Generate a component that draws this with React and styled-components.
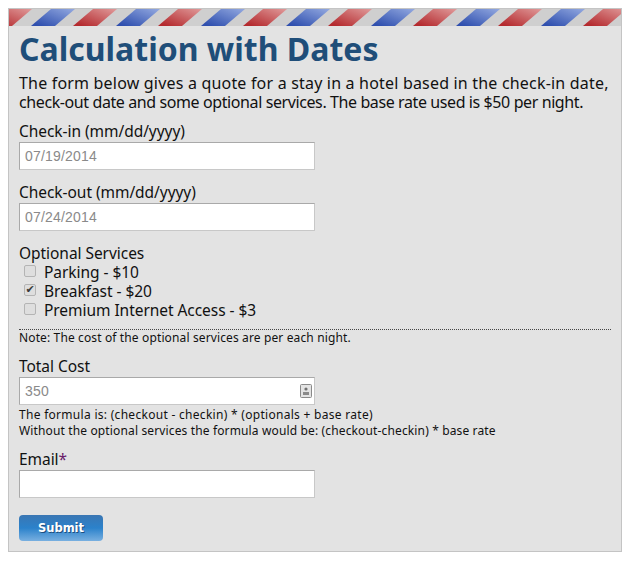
import React from "react";
import styled, { createGlobalStyle } from "styled-components";

const Global = createGlobalStyle`
  html, body { margin: 0; padding: 0; background: #fff; }
  body { font-family: "Noto Sans", "DejaVu Sans", sans-serif; color: #111; }
`;

const Card = styled.form`
  width: 614px;
  height: 544px;
  box-sizing: border-box;
  margin: 8px 0 0 8px;
  border: 1px solid #c4c4c4;
  background: #e3e3e3;
`;

const Stripe = styled.svg`
  display: block;
  width: 100%;
  height: 17px;
`;

const Body = styled.div`
  padding: 0 10px;
`;

const Title = styled.h1`
  margin: 3px 0 0;
  font-size: 32px;
  line-height: 40px;
  font-weight: 700;
  color: #1f4e79;
`;

const Intro = styled.p`
  margin: 5px 0 0;
  font-size: 16px;
  line-height: 19px;
`;

const Line = styled.span`
  display: block;
  white-space: nowrap;
  letter-spacing: ${(p) => p.$track}px;
`;

const Field = styled.div`
  margin-top: ${(p) => p.$top}px;
`;

const Label = styled.label`
  display: block;
  font-size: 15.5px;
  line-height: 20px;
  letter-spacing: -0.05px;
`;

const Star = styled.span`
  color: #6a1b6a;
`;

const InputWrap = styled.div`
  position: relative;
  width: 296px;
  margin-top: 1px;
`;

const Input = styled.input`
  display: block;
  width: 100%;
  height: 28px;
  box-sizing: border-box;
  padding: 0 5px;
  border: 1px solid #a9a9a9;
  border-bottom-color: #c8c8c8;
  border-right-color: #c8c8c8;
  background: #fff;
  font-family: "Liberation Sans", Arial, sans-serif;
  font-size: 14px;
  letter-spacing: 0.2px;
  color: #8a8a8a;
  outline: none;
`;

const CalcIcon = styled.svg`
  position: absolute;
  right: 3px;
  top: 7px;
  width: 12px;
  height: 14px;
`;

const CheckList = styled.div`
  display: flex;
  flex-direction: column;
`;

const CheckRow = styled.label`
  display: flex;
  align-items: center;
  height: 19px;
  font-size: 15.5px;
  line-height: 19px;
  letter-spacing: -0.05px;
`;

const Box = styled.input`
  appearance: none;
  position: relative;
  box-sizing: border-box;
  width: 12px;
  height: 12px;
  margin: 0 8px 4px 5px;
  border: 1px solid #b4b4b4;
  border-radius: 2px;
  background: #dedede;

  &:checked::after {
    content: "✔";
    position: absolute;
    left: -1px;
    top: -1px;
    width: 12px;
    text-align: center;
    font-family: "DejaVu Sans", sans-serif;
    font-size: 11px;
    line-height: 12px;
    color: #3a3a3a;
  }
`;

const Note = styled.div`
  margin-top: 9px;
  border-top: 1px dotted #444;
  font-size: 12px;
  line-height: 16px;
  letter-spacing: 0.13px;
`;

const Small = styled.p`
  margin: 2px 0 0;
  font-size: 12px;
  line-height: 16px;
`;

const Submit = styled.button`
  display: block;
  width: 84px;
  height: 26px;
  margin-top: 17px;
  padding: 0;
  border: 0;
  border-radius: 4px;
  background: linear-gradient(#3a76b3 0%, #2b82cb 50%, #78afe0 100%);
  color: #fff;
  font-family: "DejaVu Sans", sans-serif;
  font-size: 11.5px;
  font-weight: 700;
  text-shadow: 1px 1px 0 #1d4f80;
`;

const bands = [
  { x: 64, from: "#b42a2e", to: "#e09a9a" },
  { x: 22, from: "#2f4fae", to: "#93a9e0" },
];

function AirmailStripe() {
  return (
    <Stripe aria-hidden="true">
      <defs>
        {bands.map((b, i) => (
          <linearGradient key={i} id={"band" + i} x1="0" y1="1" x2="1" y2="0">
            <stop offset="0.1" stopColor={b.from} />
            <stop offset="1" stopColor={b.to} />
          </linearGradient>
        ))}
        <pattern id="air" width="85" height="17" patternUnits="userSpaceOnUse">
          <rect width="85" height="17" fill="#cfcfcf" />
          {bands.map((b, i) =>
            [-85, 0, 85].map((dx) => (
              <polygon
                key={i + "-" + dx}
                points={`${b.x + dx},17 ${b.x + dx + 20},0 ${b.x + dx + 44},0 ${b.x + dx + 24},17`}
                fill={`url(#band${i})`}
              />
            ))
          )}
        </pattern>
      </defs>
      <rect width="100%" height="17" fill="url(#air)" />
    </Stripe>
  );
}

export default function App() {
  return (
    <>
      <Global />
      <Card onSubmit={(e) => e.preventDefault()}>
        <AirmailStripe />
        <Body>
          <Title>Calculation with Dates</Title>
          <Intro>
            <Line $track={0.19}>
              The form below gives a quote for a stay in a hotel based in the check-in date,
            </Line>
            <Line $track={-0.4}>
              check-out date and some optional services. The base rate used is $50 per night.
            </Line>
          </Intro>
          <Field $top={9}>
            <Label>Check-in (mm/dd/yyyy)</Label>
            <InputWrap>
              <Input defaultValue="07/19/2014" />
            </InputWrap>
          </Field>
          <Field $top={12}>
            <Label>Check-out (mm/dd/yyyy)</Label>
            <InputWrap>
              <Input defaultValue="07/24/2014" />
            </InputWrap>
          </Field>
          <Field $top={12}>
            <Label>Optional Services</Label>
            <CheckList>
              <CheckRow>
                <Box type="checkbox" />
                Parking - $10
              </CheckRow>
              <CheckRow>
                <Box type="checkbox" defaultChecked />
                Breakfast - $20
              </CheckRow>
              <CheckRow>
                <Box type="checkbox" />
                Premium Internet Access - $3
              </CheckRow>
            </CheckList>
            <Note>Note: The cost of the optional services are per each night.</Note>
          </Field>
          <Field $top={10}>
            <Label>Total Cost</Label>
            <InputWrap>
              <Input defaultValue="350" readOnly />
              <CalcIcon viewBox="0 0 12 14">
                <rect x="0.5" y="0.5" width="11" height="13" rx="1" fill="#e4e4e4" stroke="#8a8a8a" />
                <circle cx="6" cy="5" r="1.6" fill="#707070" />
                <rect x="3" y="8" width="6" height="3" fill="#8a8a8a" />
              </CalcIcon>
            </InputWrap>
            <Small>
              <Line $track={0.29}>The formula is: (checkout - checkin) * (optionals + base rate)</Line>
              <Line $track={0.14}>
                Without the optional services the formula would be: (checkout-checkin) * base rate
              </Line>
            </Small>
          </Field>
          <Field $top={10}>
            <Label>
              Email<Star>*</Star>
            </Label>
            <InputWrap>
              <Input />
            </InputWrap>
          </Field>
          <Submit type="submit">Submit</Submit>
        </Body>
      </Card>
    </>
  );
}
